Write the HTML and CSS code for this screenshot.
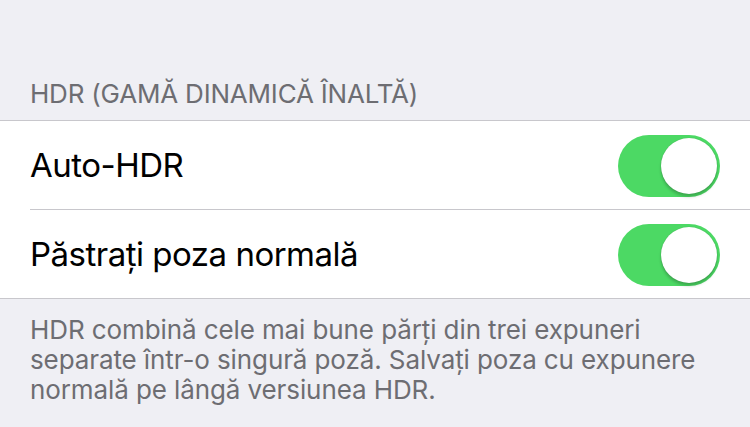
FILE: index.html
```html
<!DOCTYPE html>
<html lang="ro">
<head>
    <meta charset="UTF-8">
    <meta name="viewport" content="width=device-width, initial-scale=1.0">
    <link rel="stylesheet" href="styles.css">
    <title>HDR</title>
</head>
<body>
    <div class="settings">
        <div class="section-header">HDR (GAMĂ DINAMICĂ ÎNALTĂ)</div>
        <div class="group">
            <div class="cell">
                <span class="cell-label">Auto-HDR</span>
                <span class="switch on"><span class="knob"></span></span>
            </div>
            <div class="cell">
                <span class="cell-label">Păstrați poza normală</span>
                <span class="switch on"><span class="knob"></span></span>
            </div>
        </div>
        <div class="section-footer">
            HDR combină cele mai bune părți din trei expuneri<br>
            separate într-o singură poză. Salvați poza cu expunere<br>
            normală pe lângă versiunea HDR.
        </div>
    </div>
</body>
</html>
```

FILE: styles.css
```css
body {
    margin: 0;
    background-color: #efeff4;
    font-family: 'Inter', 'Liberation Sans', sans-serif;
}

.settings {
    width: 750px;
    height: 427px;
    overflow: hidden;
}

.section-header {
    padding: 80px 30px 12px;
    font-size: 26px;
    line-height: 28px;
    letter-spacing: -0.2px;
    color: #6d6d72;
}

.group {
    background-color: #fff;
    border-top: 1px solid #c8c7cc;
    border-bottom: 1px solid #c8c7cc;
}

.cell {
    display: flex;
    align-items: center;
    justify-content: space-between;
    height: 88px;
    padding: 0 30px 0 30px;
}

.cell + .cell {
    border-top: 1px solid #c8c7cc;
    margin-left: 30px;
    padding-left: 0;
}

.cell-label {
    font-size: 33px;
    letter-spacing: -0.5px;
    color: #000;
}

.switch {
    width: 102px;
    height: 62px;
    border-radius: 31px;
    background-color: #4cd964;
    position: relative;
    margin-top: 1px;
}

.knob {
    position: absolute;
    top: 3px;
    right: 3px;
    width: 56px;
    height: 56px;
    border-radius: 50%;
    background-color: #fff;
    box-shadow: 0 3px 3px rgba(0, 0, 0, 0.2), 0 0 1px rgba(0, 0, 0, 0.25);
}

.section-footer {
    padding: 16px 30px 0;
    font-size: 26px;
    line-height: 30px;
    letter-spacing: -0.1px;
    color: #6d6d72;
}
```
